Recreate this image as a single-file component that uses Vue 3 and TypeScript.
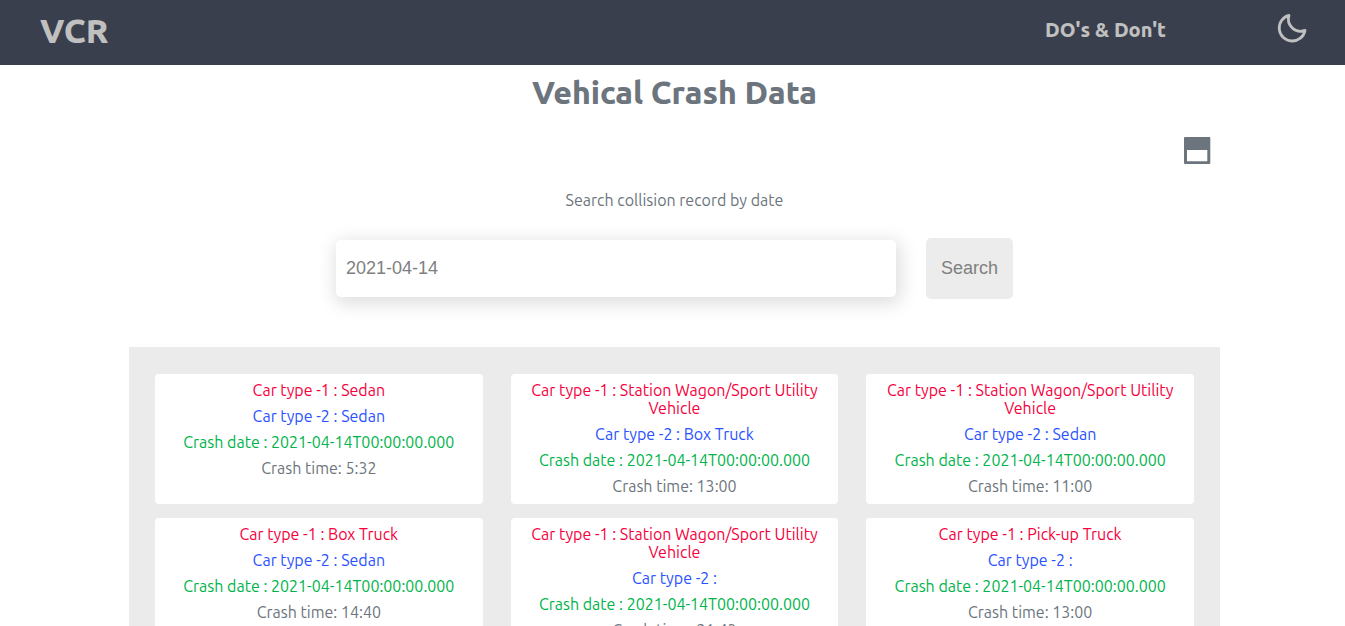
<script setup lang="ts">
import { ref } from 'vue'

interface Crash {
  id: number
  first: string
  second: string
  date: string
  time: string
}

const query = ref('')
const day = '2021-04-14T00:00:00.000'

const crashes: Crash[] = [
  { id: 1, first: 'Sedan', second: 'Sedan', date: day, time: '5:32' },
  { id: 2, first: 'Station Wagon/Sport Utility Vehicle', second: 'Box Truck', date: day, time: '13:00' },
  { id: 3, first: 'Station Wagon/Sport Utility Vehicle', second: 'Sedan', date: day, time: '11:00' },
  { id: 4, first: 'Box Truck', second: 'Sedan', date: day, time: '14:40' },
  { id: 5, first: 'Station Wagon/Sport Utility Vehicle', second: '', date: day, time: '21:43' },
  { id: 6, first: 'Pick-up Truck', second: '', date: day, time: '13:00' },
]
</script>

<template>
  <div class="page">
    <header class="bar">
      <a class="brand" href="#">VCR</a>
      <nav class="links">
        <a class="link" href="#dos">DO's &amp; Don't</a>
        <button class="icon-button" type="button" aria-label="Toggle dark mode">
          <svg width="30" height="30" viewBox="0 0 30 30" fill="none" stroke="currentColor" stroke-width="2.8" stroke-linejoin="round">
            <path d="M12 2.4A13 13 0 1 0 28 17.4A12.2 12.2 0 0 1 12 2.4Z" />
          </svg>
        </button>
      </nav>
    </header>

    <main class="content">
      <h1 class="title">Vehical Crash Data</h1>
      <div class="tools">
        <button class="icon-button" type="button" aria-label="Change layout">
          <svg width="28" height="28" viewBox="0 0 28 28" fill="currentColor">
            <path fill-rule="evenodd" d="M2 0H26.3Q27.3 0 27.3 1V26Q27.3 27 26.3 27H2Q1 27 1 26V1Q1 0 2 0ZM4 13V24.3H24.3V13Z" />
          </svg>
        </button>
      </div>

      <form class="search" @submit.prevent>
        <label class="hint" for="crash-date">Search collision record by date</label>
        <div class="fields">
          <input id="crash-date" v-model="query" class="field" type="text" placeholder="2021-04-14" />
          <button class="submit" type="submit">Search</button>
        </div>
      </form>

      <section class="panel">
        <article v-for="crash in crashes" :key="crash.id" class="card">
          <p class="red">Car type -1 : {{ crash.first }}</p>
          <p class="blue">Car type -2 : {{ crash.second }}</p>
          <p class="green">Crash date : {{ crash.date }}</p>
          <p>Crash time: {{ crash.time }}</p>
        </article>
      </section>
    </main>
  </div>
</template>

<style>
body {
  margin: 0;
  background: #fff;
}
</style>

<style scoped>
.page {
  font-family: Ubuntu, "Noto Sans", sans-serif;
  font-size: 16px;
  font-weight: 430;
  line-height: 18px;
  color: #6c757d;
}
.bar {
  display: flex;
  align-items: center;
  justify-content: space-between;
  box-sizing: border-box;
  height: 65px;
  padding: 0 38px 6px 40px;
  background: #393f4d;
  color: #c0c0c0;
}
.brand,
.link {
  color: inherit;
  font-weight: 800;
  text-decoration: none;
}
.brand {
  font-size: 34px;
  line-height: 40px;
}
.links {
  display: flex;
  align-items: center;
  gap: 111px;
}
.link {
  font-size: 20px;
  line-height: 24px;
}
.icon-button {
  display: flex;
  padding: 0;
  border: 0;
  background: none;
  color: inherit;
  cursor: pointer;
}
.bar .icon-button {
  margin-bottom: 4px;
}
.content {
  padding: 7px 125px 0 129px;
}
.title {
  margin: 0;
  font-size: 32px;
  font-weight: 800;
  line-height: 40px;
  text-align: center;
}
.tools {
  display: flex;
  justify-content: flex-end;
  padding: 25px 9px 26px 0;
}
.search {
  display: flex;
  flex-direction: column;
  align-items: center;
  gap: 29px;
}
.fields {
  display: flex;
  align-items: center;
  gap: 30px;
}
.field,
.submit {
  box-sizing: border-box;
  border: 0;
  border-radius: 5px;
  font-family: "Liberation Sans", Arial, sans-serif;
  font-size: 18px;
  line-height: 20px;
}
.field {
  width: 560px;
  height: 57px;
  padding: 0 10px;
  background: #fff;
  color: #757575;
  box-shadow: 2px 4px 18px 3px rgba(0, 0, 0, 0.13);
  outline: none;
}
.field::placeholder {
  color: #808080;
  opacity: 1;
}
.submit {
  height: 61px;
  padding: 0 15px 2px;
  background: #ececec;
  color: #808080;
  cursor: pointer;
}
.panel {
  display: grid;
  grid-template-columns: repeat(3, minmax(0, 1fr));
  gap: 14px 28px;
  margin-top: 48px;
  padding: 27px 26px;
  background: #ebebeb;
}
.card {
  display: flex;
  flex-direction: column;
  gap: 8px;
  padding: 7px 8px 9px;
  border-radius: 4px;
  background: #fff;
  text-align: center;
}
.card p {
  margin: 0;
}
.card .red {
  color: #f5003d;
}
.card .blue {
  color: #2a52ff;
}
.card .green {
  color: #00b44b;
}
</style>
